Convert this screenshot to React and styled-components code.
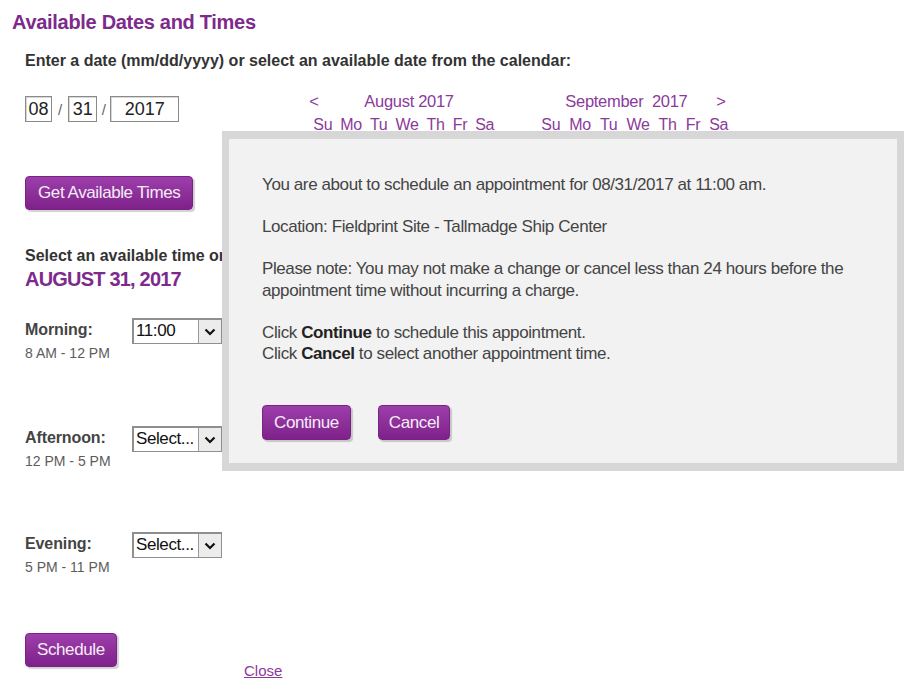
import React from "react";
import styled, { createGlobalStyle } from "styled-components";

const Global = createGlobalStyle`
  body {
    margin: 0;
    background: #fff;
    font-family: "Liberation Sans", Arial, sans-serif;
  }
`;

const Page = styled.div`
  position: relative;
  width: 917px;
  height: 694px;
  overflow: hidden;
`;

const Title = styled.h1`
  margin: 0;
  padding: 10px 0 0 12px;
  font-size: 20px;
  line-height: 24px;
  font-weight: bold;
  color: #7d2a8c;
  letter-spacing: -0.3px;
`;

const Body = styled.div`
  padding-left: 25px;
`;

const Prompt = styled.div`
  margin-top: ${({ top }) => top || 0}px;
  font-size: 16px;
  line-height: 18px;
  font-weight: bold;
  color: #333;
  letter-spacing: 0;
`;

const DateRow = styled.div`
  display: flex;
  align-items: flex-start;
  margin-top: 26px;
`;

const DateFields = styled.div`
  display: flex;
  align-items: center;
  height: 26px;
`;

const DateBox = styled.div`
  box-sizing: border-box;
  width: ${({ w }) => w}px;
  height: 26px;
  border: 1px solid #8a8a8a;
  box-shadow: inset 1px 1px 0 #d8d8d8;
  font-size: 18px;
  line-height: 24px;
  color: #222;
  text-align: center;
`;

const Slash = styled.span`
  padding: 0 ${({ pad }) => pad}px;
  font-size: 15px;
  color: #666;
`;

const Calendar = styled.div`
  display: flex;
  gap: 47px;
  margin-left: 134px;
  margin-top: -6px;
  color: #8b3a9c;
`;

const Month = styled.div`
  display: flex;
  flex-direction: column;
  width: ${({ w }) => w}px;
`;

const MonthHead = styled.div`
  display: flex;
  align-items: center;
  height: 22px;
  font-size: 16.5px;
  letter-spacing: -0.3px;
  white-space: pre;
`;

const Arrow = styled.span`
  width: ${({ w }) => w}px;
  margin-left: ${({ shift }) => shift || 0}px;
`;

const Days = styled.div`
  display: flex;
  gap: ${({ gap }) => gap}px;
  font-size: 16px;
  line-height: 22px;
  letter-spacing: -0.3px;
  margin-top: 2px;
`;

const PurpleButton = styled.button`
  display: block;
  box-sizing: border-box;
  height: ${({ h }) => h || 34}px;
  padding: 0 ${({ pad }) => pad || 12}px;
  margin-top: ${({ top }) => top || 0}px;
  border: 1px solid #7a2283;
  border-radius: 4px;
  background: linear-gradient(#9c3fab, #7f2189);
  box-shadow: 2px 2px 1px rgba(0, 0, 0, 0.18);
  color: #f6ecf8;
  font-family: "Liberation Sans", Arial, sans-serif;
  font-size: 17px;
  letter-spacing: -0.4px;
  cursor: pointer;
`;

const DateTitle = styled.div`
  margin-top: 2px;
  font-size: 20px;
  line-height: 24px;
  font-weight: bold;
  color: #7d2a8c;
  letter-spacing: -0.8px;
`;

const Slot = styled.div`
  display: flex;
  align-items: flex-start;
  margin-top: ${({ top }) => top}px;
`;

const SlotLabel = styled.div`
  width: 107px;
`;

const SlotName = styled.div`
  font-size: 16px;
  line-height: 20px;
  font-weight: bold;
  color: #444;
  letter-spacing: -0.1px;
`;

const SlotHours = styled.div`
  font-size: 14px;
  line-height: 18px;
  margin-top: 4px;
  color: #5c5c5c;
`;

const Select = styled.div`
  display: flex;
  box-sizing: border-box;
  width: 90px;
  height: 26px;
  margin-top: -2px;
  border: 2px solid #8f8f8f;
  border-right-width: 1px;
  border-bottom-width: 1px;
  background: #fff;
`;

const SelectValue = styled.span`
  flex: 1;
  padding-left: 2px;
  font-size: 17px;
  line-height: 22px;
  color: #111;
  letter-spacing: -0.4px;
  overflow: hidden;
  white-space: nowrap;
`;

const SelectArrow = styled.span`
  display: flex;
  align-items: center;
  justify-content: center;
  width: 22px;
  border-left: 1px solid #9a9a9a;
  background: #ececec;
`;

const CloseLink = styled.a`
  display: block;
  margin: -5px 0 0 219px;
  font-size: 15px;
  color: #8b3a9c;
  text-decoration: underline;
  cursor: pointer;
`;

const Dialog = styled.div`
  position: absolute;
  left: 222px;
  top: 131px;
  box-sizing: border-box;
  width: 682px;
  height: 340px;
  border: 7px solid #d7d7d7;
  border-top-width: 8px;
  border-bottom-width: 8px;
  background: #f2f2f2;
  padding: 35px 0 0 33px;
  color: #444;
`;

const Para = styled.p`
  margin: 0 0 20.5px;
  font-size: 17px;
  line-height: 21.5px;
  letter-spacing: -0.4px;
`;

const Strong = styled.b`
  color: #222;
`;

const Actions = styled.div`
  display: flex;
  gap: 27px;
  padding-top: 20px;
`;

const Chevron = () => (
  <svg width="12" height="8" viewBox="0 0 12 8">
    <path d="M1.5 1.5 L6 6 L10.5 1.5" fill="none" stroke="#111" strokeWidth="2.2" />
  </svg>
);

const dayNames = ["Su", "Mo", "Tu", "We", "Th", "Fr", "Sa"];

const slots = [
  { name: "Morning:", hours: "8 AM - 12 PM", value: "11:00", top: 29 },
  { name: "Afternoon:", hours: "12 PM - 5 PM", value: "Select...", top: 66 },
  { name: "Evening:", hours: "5 PM - 11 PM", value: "Select...", top: 64 },
];

const App = () => {
  return (
    <Page>
      <Global />
      <Title>Available Dates and Times</Title>
      <Body>
        <Prompt top={18}>Enter a date (mm/dd/yyyy) or select an available date from the calendar:</Prompt>
        <DateRow>
          <DateFields>
            <DateBox w={27}>08</DateBox>
            <Slash pad={6}>/</Slash>
            <DateBox w={29}>31</DateBox>
            <Slash pad={4.5}>/</Slash>
            <DateBox w={69}>2017</DateBox>
          </DateFields>
          <Calendar>
            <Month w={181}>
              <MonthHead>
                <Arrow w={55} shift={-4}>&lt;</Arrow>
                <span>August 2017</span>
              </MonthHead>
              <Days gap={8}>
                {dayNames.map((d) => (
                  <span key={d}>{d}</span>
                ))}
              </Days>
            </Month>
            <Month w={190}>
              <MonthHead>
                <Arrow w={24} />
                <Arrow w={151}>{"September  2017"}</Arrow>
                <span>&gt;</span>
              </MonthHead>
              <Days gap={9}>
                {dayNames.map((d) => (
                  <span key={d}>{d}</span>
                ))}
              </Days>
            </Month>
          </Calendar>
        </DateRow>

        <PurpleButton top={40}>Get Available Times</PurpleButton>

        <Prompt top={37}>Select an available time on</Prompt>
        <DateTitle>AUGUST 31, 2017</DateTitle>

        {slots.map((s) => (
          <Slot key={s.name} top={s.top}>
            <SlotLabel>
              <SlotName>{s.name}</SlotName>
              <SlotHours>{s.hours}</SlotHours>
            </SlotLabel>
            <Select>
              <SelectValue>{s.value}</SelectValue>
              <SelectArrow>
                <Chevron />
              </SelectArrow>
            </Select>
          </Slot>
        ))}

        <PurpleButton top={57} pad={11}>Schedule</PurpleButton>
        <CloseLink>Close</CloseLink>
      </Body>

      <Dialog>
        <Para>You are about to schedule an appointment for 08/31/2017 at 11:00 am.</Para>
        <Para>Location: Fieldprint Site - Tallmadge Ship Center</Para>
        <Para>
          Please note: You may not make a change or cancel less than 24 hours before the
          <br />
          appointment time without incurring a charge.
        </Para>
        <Para>
          Click <Strong>Continue</Strong> to schedule this appointment.
          <br />
          Click <Strong>Cancel</Strong> to select another appointment time.
        </Para>
        <Actions>
          <PurpleButton h={35} pad={11}>Continue</PurpleButton>
          <PurpleButton h={35} pad={10}>Cancel</PurpleButton>
        </Actions>
      </Dialog>
    </Page>
  );
};

export default App;
